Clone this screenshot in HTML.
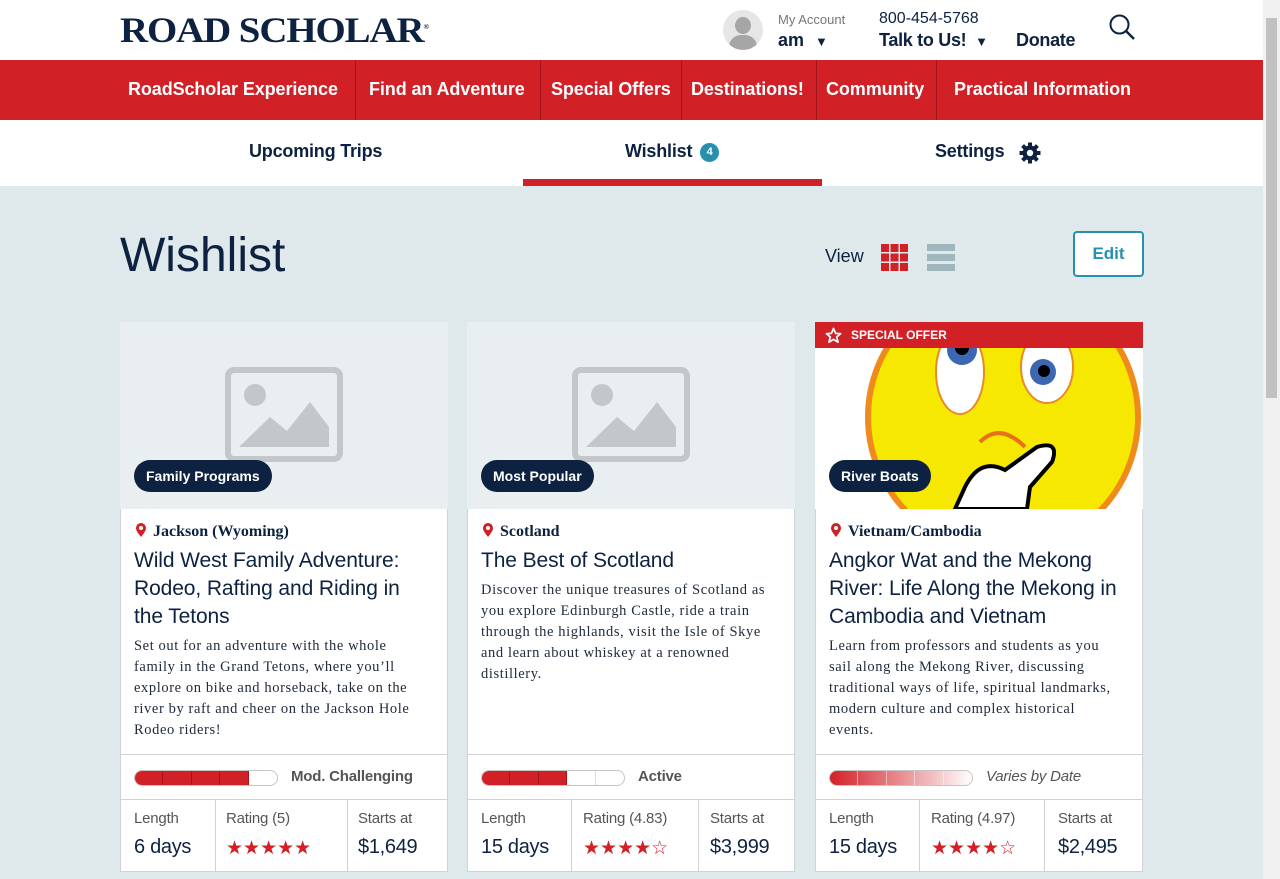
<!DOCTYPE html>
<html><head><meta charset="utf-8"><style>
*{box-sizing:border-box;margin:0;padding:0}
body{width:1280px;height:879px;overflow:hidden;background:#dfe8ea;font-family:"Liberation Sans",sans-serif;color:#0d2240;position:relative}
.abs{position:absolute}
.nw{white-space:nowrap}
#hdr{left:0;top:0;width:1263px;height:60px;background:#fff}
#nav{left:0;top:60px;width:1263px;height:60px;background:#d22027}
.ni{position:absolute;top:0;height:60px;line-height:58px;color:#fff;font-weight:bold;font-size:18px;letter-spacing:-0.1px}
.sep{position:absolute;top:0;width:1px;height:60px;background:#a3151b}
#tabs{left:0;top:120px;width:1263px;height:66px;background:#fff}
.tab{position:absolute;top:21px;font-size:18px;font-weight:bold;letter-spacing:-0.2px}
#sb{left:1263px;top:0;width:17px;height:879px;background:#f1f1f1}
.card{position:absolute;top:322px;width:328px;height:550px;background:#fff;border:1px solid #cdd3d6}
.img{position:absolute;left:-1px;top:-1px;width:328px;height:187px;background:#e9eef0;overflow:hidden}
.pill{position:absolute;left:14px;top:138px;height:32px;line-height:32px;padding:0 12px;border-radius:16px;background:#0d2240;color:#fff;font-weight:bold;font-size:14px}
.loc{position:absolute;left:14px;top:200px;font-family:"Liberation Serif",serif;font-weight:bold;font-size:16px}
.loc svg{vertical-align:-2px;margin-right:6px}
.ttl{position:absolute;left:13px;top:224px;font-size:21px;line-height:28px;letter-spacing:-0.1px}
.dsc{position:absolute;left:13px;font-family:"Liberation Serif",serif;font-size:14.5px;line-height:21px;color:#1e2a3a;letter-spacing:.6px}
.dr{position:absolute;left:0;top:431px;width:326px;border-top:1px solid #cdd3d6;height:46px}
.bar{position:absolute;left:13px;top:15px;width:144px;height:16px;border:1px solid #c5c5c5;border-radius:8px;overflow:hidden;display:flex}
.bar i{display:block;width:28.8px;height:100%;border-right:1px solid #a3151b}
.dl{position:absolute;left:170px;top:13px;font-size:15px;color:#555;font-weight:bold;letter-spacing:-0.2px}
.st{position:absolute;left:0;top:476px;width:326px;height:73px;border-top:1px solid #cdd3d6}
.sc{position:absolute;top:0;height:72px;border-right:1px solid #cdd3d6}
.sl{position:absolute;top:10px;font-size:15px;color:#555;letter-spacing:-0.2px}
.sv{position:absolute;top:36px;font-size:20px;letter-spacing:-0.3px}
.stars{position:absolute;top:37px;color:#d22027;font-size:19px;letter-spacing:0px}
</style></head><body>
<div id="hdr" class="abs">
 <div class="abs nw" style="left:120px;top:9px;font-family:'Liberation Serif',serif;font-weight:bold;font-size:36px;letter-spacing:-1px;color:#0d2240;transform:scaleX(1.08);transform-origin:left">ROAD SCHOLAR<sup style="font-size:7px">®</sup></div>
 <div class="abs" style="left:723px;top:10px;width:40px;height:40px;border-radius:50%;background:#e6e6e6;overflow:hidden"><div class="abs" style="left:12px;top:7px;width:16px;height:17px;border-radius:50%;background:#a6a6a6"></div><div class="abs" style="left:6px;top:25px;width:28px;height:20px;border-radius:12px 12px 0 0;background:#a6a6a6"></div></div>
 <div class="abs nw" style="left:778px;top:12px;font-size:13px;color:#777">My Account</div>
 <div class="abs nw" style="left:778px;top:30px;font-size:18px;font-weight:bold">am <span style="font-size:13px;margin-left:6px">▼</span></div>
 <div class="abs nw" style="left:879px;top:10px;font-size:16px">800-454-5768</div>
 <div class="abs nw" style="left:879px;top:30px;font-size:18px;font-weight:bold;letter-spacing:-.3px">Talk to Us! <span style="font-size:13px;margin-left:4px">▼</span></div>
 <div class="abs nw" style="left:1016px;top:30px;font-size:18px;font-weight:bold;letter-spacing:-.3px">Donate</div>
 <svg class="abs" style="left:1108px;top:13px" width="28" height="28" viewBox="0 0 28 28"><circle cx="11.5" cy="11.5" r="9" fill="none" stroke="#0d2240" stroke-width="2"/><line x1="18" y1="18" x2="26" y2="26" stroke="#0d2240" stroke-width="2.4"/></svg>
</div>
<div id="nav" class="abs">
 <div class="ni nw" style="left:128px">RoadScholar Experience</div><div class="sep" style="left:355px"></div>
 <div class="ni nw" style="left:369px">Find an Adventure</div><div class="sep" style="left:540px"></div>
 <div class="ni nw" style="left:551px">Special Offers</div><div class="sep" style="left:681px"></div>
 <div class="ni nw" style="left:691px">Destinations!</div><div class="sep" style="left:816px"></div>
 <div class="ni nw" style="left:826px">Community</div><div class="sep" style="left:936px"></div>
 <div class="ni nw" style="left:954px">Practical Information</div>
</div>
<div id="tabs" class="abs">
 <div class="tab nw" style="left:249px">Upcoming Trips</div>
 <div class="tab nw" style="left:625px">Wishlist <span style="display:inline-block;width:19px;height:19px;border-radius:50%;background:#2790b0;color:#fff;font-size:11px;line-height:19px;text-align:center;vertical-align:2px;margin-left:3px">4</span></div>
 <div class="tab nw" style="left:935px">Settings</div>
 <svg class="abs" style="left:1019px;top:22px" width="22" height="22" viewBox="0 0 22 22"><g fill="#0d2240"><circle cx="11" cy="11" r="7.5"/><rect x="9" y="0.5" width="4" height="21"/><rect x="0.5" y="9" width="21" height="4"/><rect x="9" y="0.5" width="4" height="21" transform="rotate(45 11 11)"/><rect x="9" y="0.5" width="4" height="21" transform="rotate(-45 11 11)"/></g><circle cx="11" cy="11" r="3.2" fill="#fff"/></svg>
 <div class="abs" style="left:523px;top:59px;width:299px;height:7px;background:#d22027"></div>
</div>
<div class="abs nw" style="left:120px;top:228px;font-size:48px;color:#0d2240">Wishlist</div>
<div class="abs nw" style="left:825px;top:246px;font-size:18px">View</div>
<svg class="abs" style="left:881px;top:244px" width="27" height="27"><g fill="#d22027"><rect x="0" y="0" width="8" height="8"/><rect x="9.5" y="0" width="8" height="8"/><rect x="19" y="0" width="8" height="8"/><rect x="0" y="9.5" width="8" height="8"/><rect x="9.5" y="9.5" width="8" height="8"/><rect x="19" y="9.5" width="8" height="8"/><rect x="0" y="19" width="8" height="8"/><rect x="9.5" y="19" width="8" height="8"/><rect x="19" y="19" width="8" height="8"/></g></svg>
<svg class="abs" style="left:927px;top:244px" width="28" height="27"><g fill="#9fb6bd"><rect y="0" width="28" height="7"/><rect y="10" width="28" height="7"/><rect y="20" width="28" height="7"/></g></svg>
<div class="abs" style="left:1073px;top:231px;width:71px;height:46px;border:2px solid #2790b0;border-radius:4px;background:#fff;color:#2790b0;font-size:17px;font-weight:bold;text-align:center;line-height:42px">Edit</div>

<!-- card 1 -->
<div class="card" style="left:120px">
 <div class="img"><svg class="abs" style="left:105px;top:45px" width="118" height="95" viewBox="0 0 118 95"><rect x="3" y="3" width="112" height="89" rx="6" fill="none" stroke="#c3c7c9" stroke-width="6"/><circle cx="30" cy="28" r="11" fill="#c3c7c9"/><path d="M14 80 L45 50 L62 64 L85 35 L104 60 L104 80Z" fill="#c3c7c9"/></svg><div class="pill nw">Family Programs</div></div>
 <div class="loc nw"><svg width="12" height="15" viewBox="0 0 12 15"><path d="M6 14 C2 9 1 7 1 5 A5 5 0 0 1 11 5 C11 7 10 9 6 14Z" fill="#d22027"/><circle cx="6" cy="5" r="2" fill="#fff"/></svg>Jackson (Wyoming)</div>
 <div class="ttl nw">Wild West Family Adventure:<br>Rodeo, Rafting and Riding in<br>the Tetons</div>
 <div class="dsc nw" style="top:313px">Set out for an adventure with the whole<br>family in the Grand Tetons, where you’ll<br>explore on bike and horseback, take on the<br>river by raft and cheer on the Jackson Hole<br>Rodeo riders!</div>
 <div class="dr"><div class="bar"><i style="background:#d22027"></i><i style="background:#d22027"></i><i style="background:#d22027"></i><i style="background:#d22027"></i><i style="border:0"></i></div><div class="dl nw">Mod. Challenging</div></div>
 <div class="st"><div class="sc" style="left:0;width:95px"><div class="sl" style="left:13px">Length</div><div class="sv nw" style="left:13px">6 days</div></div><div class="sc" style="left:95px;width:132px"><div class="sl nw" style="left:10px">Rating (5)</div><div class="stars nw" style="left:10px">★★★★★</div></div><div class="sl nw" style="left:237px">Starts at</div><div class="sv" style="left:237px">$1,649</div></div>
</div>
<!-- card 2 -->
<div class="card" style="left:467px">
 <div class="img"><svg class="abs" style="left:105px;top:45px" width="118" height="95" viewBox="0 0 118 95"><rect x="3" y="3" width="112" height="89" rx="6" fill="none" stroke="#c3c7c9" stroke-width="6"/><circle cx="30" cy="28" r="11" fill="#c3c7c9"/><path d="M14 80 L45 50 L62 64 L85 35 L104 60 L104 80Z" fill="#c3c7c9"/></svg><div class="pill nw">Most Popular</div></div>
 <div class="loc nw"><svg width="12" height="15" viewBox="0 0 12 15"><path d="M6 14 C2 9 1 7 1 5 A5 5 0 0 1 11 5 C11 7 10 9 6 14Z" fill="#d22027"/><circle cx="6" cy="5" r="2" fill="#fff"/></svg>Scotland</div>
 <div class="ttl nw">The Best of Scotland</div>
 <div class="dsc nw" style="top:257px">Discover the unique treasures of Scotland as<br>you explore Edinburgh Castle, ride a train<br>through the highlands, visit the Isle of Skye<br>and learn about whiskey at a renowned<br>distillery.</div>
 <div class="dr"><div class="bar"><i style="background:#d22027"></i><i style="background:#d22027"></i><i style="background:#d22027"></i><i style="border-right:1px solid #ddd"></i><i style="border:0"></i></div><div class="dl nw">Active</div></div>
 <div class="st"><div class="sc" style="left:0;width:104px"><div class="sl" style="left:13px">Length</div><div class="sv nw" style="left:13px">15 days</div></div><div class="sc" style="left:104px;width:127px"><div class="sl nw" style="left:11px">Rating (4.83)</div><div class="stars nw" style="left:11px">★★★★<span style="color:#d22027">☆</span></div></div><div class="sl nw" style="left:242px">Starts at</div><div class="sv" style="left:242px">$3,999</div></div>
</div>
<!-- card 3 -->
<div class="card" style="left:815px">
 <div class="img" style="background:#fff"><svg class="abs" style="left:0;top:0" width="328" height="187" viewBox="0 0 328 187"><circle cx="188" cy="95" r="135" fill="#f6e800" stroke="#f08a1c" stroke-width="6"/><ellipse cx="145" cy="50" rx="24" ry="42" fill="#fff" stroke="#e88a2a" stroke-width="2"/><ellipse cx="232" cy="45" rx="26" ry="36" fill="#fff" stroke="#e88a2a" stroke-width="2"/><circle cx="147" cy="28" r="15" fill="#3c67b3"/><circle cx="147" cy="26" r="7" fill="#000"/><circle cx="228" cy="50" r="13" fill="#3c67b3"/><circle cx="229" cy="49" r="6" fill="#000"/><path d="M165 120 Q185 100 210 125" fill="none" stroke="#e8701c" stroke-width="4"/><path d="M150 165 Q165 135 190 148 L222 125 Q245 118 237 140 L215 165 L212 187 L140 187Z" fill="#fff" stroke="#000" stroke-width="4"/></svg><div class="abs nw" style="left:0;top:0;width:328px;height:26px;background:#d22027;color:#fff;font-size:12px;font-weight:bold;line-height:26px;padding-left:36px">SPECIAL OFFER</div><svg class="abs" style="left:10px;top:5px" width="17" height="17" viewBox="0 0 24 24"><path d="M12 2 L15 9 L22 9.5 L16.5 14 L18.5 21.5 L12 17.5 L5.5 21.5 L7.5 14 L2 9.5 L9 9Z" fill="none" stroke="#fff" stroke-width="2.4" stroke-linejoin="round"/></svg><div class="pill nw">River Boats</div></div>
 <div class="loc nw"><svg width="12" height="15" viewBox="0 0 12 15"><path d="M6 14 C2 9 1 7 1 5 A5 5 0 0 1 11 5 C11 7 10 9 6 14Z" fill="#d22027"/><circle cx="6" cy="5" r="2" fill="#fff"/></svg>Vietnam/Cambodia</div>
 <div class="ttl nw">Angkor Wat and the Mekong<br>River: Life Along the Mekong in<br>Cambodia and Vietnam</div>
 <div class="dsc nw" style="top:313px">Learn from professors and students as you<br>sail along the Mekong River, discussing<br>traditional ways of life, spiritual landmarks,<br>modern culture and complex historical<br>events.</div>
 <div class="dr"><div class="bar" style="background:linear-gradient(90deg,#d22027,#f7dcdd 85%,#fff)"><i style="border-right:1px solid rgba(255,255,255,.5)"></i><i style="border-right:1px solid rgba(255,255,255,.5)"></i><i style="border-right:1px solid rgba(255,255,255,.5)"></i><i style="border-right:1px solid rgba(255,255,255,.5)"></i><i style="border:0"></i></div><div class="dl nw" style="font-style:italic;font-weight:normal">Varies by Date</div></div>
 <div class="st"><div class="sc" style="left:0;width:104px"><div class="sl" style="left:13px">Length</div><div class="sv nw" style="left:13px">15 days</div></div><div class="sc" style="left:104px;width:125px"><div class="sl nw" style="left:11px">Rating (4.97)</div><div class="stars nw" style="left:11px">★★★★<span>☆</span></div></div><div class="sl nw" style="left:242px">Starts at</div><div class="sv" style="left:242px">$2,495</div></div>
</div>
<div id="sb" class="abs"><div class="abs" style="left:3px;top:18px;width:11px;height:380px;background:#c1c1c1"></div></div>
</body></html>
